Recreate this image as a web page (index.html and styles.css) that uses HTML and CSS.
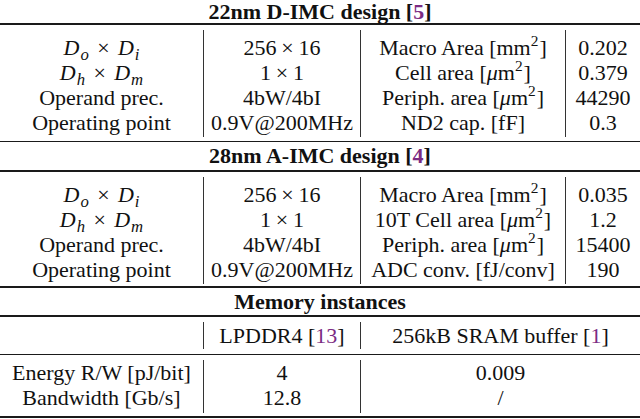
FILE: index.html
```html
<!DOCTYPE html>
<html lang="en">
<head>
  <meta charset="UTF-8">
  <meta name="viewport" content="width=device-width, initial-scale=1.0">
  <link rel="stylesheet" href="styles.css">
  <title>IMC design parameters</title>
</head>
<body>
  <div class="params">

    <!-- 22nm digital IMC -->
    <div class="title first">22nm D-IMC design [<span class="cite">5</span>]</div>
    <div class="grid design light">
      <div class="cell">
        <span class="math"><i>D</i><sub><i>o</i></sub><span class="mop">&times;</span><i>D</i><sub><i>i</i></sub></span>
      </div>
      <div class="cell vl">256<span class="op">&times;</span>16</div>
      <div class="cell vl">Macro Area [mm<sup>2</sup>]</div>
      <div class="cell vl">0.202</div>

      <div class="cell">
        <span class="math"><i>D</i><sub><i>h</i></sub><span class="mop">&times;</span><i>D</i><sub><i>m</i></sub></span>
      </div>
      <div class="cell vl">1<span class="op">&times;</span>1</div>
      <div class="cell vl">Cell area [<i>&mu;</i>m<sup>2</sup>]</div>
      <div class="cell vl">0.379</div>

      <div class="cell">Operand prec.</div>
      <div class="cell vl">4bW/4bI</div>
      <div class="cell vl">Periph. area [<i>&mu;</i>m<sup>2</sup>]</div>
      <div class="cell vl">44290</div>

      <div class="cell">Operating point</div>
      <div class="cell vl">0.9V@200MHz</div>
      <div class="cell vl">ND2 cap. [fF]</div>
      <div class="cell vl">0.3</div>
    </div>

    <!-- 28nm analog IMC -->
    <div class="title">28nm A-IMC design [<span class="cite">4</span>]</div>
    <div class="grid design heavy">
      <div class="cell">
        <span class="math"><i>D</i><sub><i>o</i></sub><span class="mop">&times;</span><i>D</i><sub><i>i</i></sub></span>
      </div>
      <div class="cell vl">256<span class="op">&times;</span>16</div>
      <div class="cell vl">Macro Area [mm<sup>2</sup>]</div>
      <div class="cell vl">0.035</div>

      <div class="cell">
        <span class="math"><i>D</i><sub><i>h</i></sub><span class="mop">&times;</span><i>D</i><sub><i>m</i></sub></span>
      </div>
      <div class="cell vl">1<span class="op">&times;</span>1</div>
      <div class="cell vl">10T Cell area [<i>&mu;</i>m<sup>2</sup>]</div>
      <div class="cell vl">1.2</div>

      <div class="cell">Operand prec.</div>
      <div class="cell vl">4bW/4bI</div>
      <div class="cell vl">Periph. area [<i>&mu;</i>m<sup>2</sup>]</div>
      <div class="cell vl">15400</div>

      <div class="cell">Operating point</div>
      <div class="cell vl">0.9V@200MHz</div>
      <div class="cell vl">ADC conv. [fJ/conv]</div>
      <div class="cell vl">190</div>
    </div>

    <!-- memories -->
    <div class="title mem">Memory instances</div>
    <div class="grid mem-head">
      <div class="cell"></div>
      <div class="cell vl">LPDDR4 [<span class="cite">13</span>]</div>
      <div class="cell vl wide">256kB SRAM buffer [<span class="cite">1</span>]</div>
    </div>
    <div class="grid mem-data">
      <div class="cell">Energy R/W [pJ/bit]</div>
      <div class="cell vl">4</div>
      <div class="cell vl wide">0.009</div>

      <div class="cell">Bandwidth [Gb/s]</div>
      <div class="cell vl">12.8</div>
      <div class="cell vl wide">/</div>
    </div>
  </div>
</body>
</html>
```

FILE: styles.css
```css
body {
  margin: 0;
  background-color: #fff;
  color: #111;
  font-family: "Liberation Serif", "DejaVu Serif", serif;
  font-size: 22px;
}

.params {
  width: 640px;
}

/* section titles */
.title {
  height: 28px;
  line-height: 28px;
  font-weight: bold;
  text-align: center;
  border-bottom: 2px solid #1a1a1a;
}

.title.first {
  height: 23px;
  line-height: 24px;
}

.title.mem {
  height: 27px;
  line-height: 27px;
}

/* body blocks: 4 columns, rules below */
.grid {
  display: grid;
  grid-template-columns: 203px 157px 205px 75px;
}

.cell {
  height: 25px;
  line-height: 25px;
  text-align: center;
  white-space: nowrap;
}

.vl {
  border-left: 1px solid #333;
}

.wide {
  grid-column: span 2;
}

.design {
  padding: 5px 0 4px;
}

.design .cell:nth-child(-n+4) {
  padding-top: 5px;
}

.design .cell:nth-last-child(-n+4) {
  padding-bottom: 2px;
}

.design.light {
  border-bottom: 1px solid #1a1a1a;
}

.design.heavy {
  padding-bottom: 2px;
  border-bottom: 2px solid #1a1a1a;
}

.mem-head {
  padding: 5px 0;
  border-bottom: 1px solid #1a1a1a;
}

.mem-head .cell {
  height: 27px;
  line-height: 27px;
}

.mem-data {
  padding: 5px 0 3px;
  border-bottom: 2px solid #1a1a1a;
}

.mem-data .cell:nth-last-child(-n+3) {
  padding-bottom: 3px;
}

.cite {
  color: #7b2b83;
}

/* math: italic symbols with subscripts */
.math i {
  font-style: italic;
}

.math > i {
  margin-right: 1px;
}

.math sub {
  font-size: 76%;
}

.op {
  margin: 0 0.22em;
}

.mop {
  margin: 0 0.38em;
}

sub,
sup {
  font-size: 70%;
  line-height: 0;
}

sub {
  vertical-align: -5px;
}

sup {
  vertical-align: 9px;
  margin-right: 1px;
}
```
